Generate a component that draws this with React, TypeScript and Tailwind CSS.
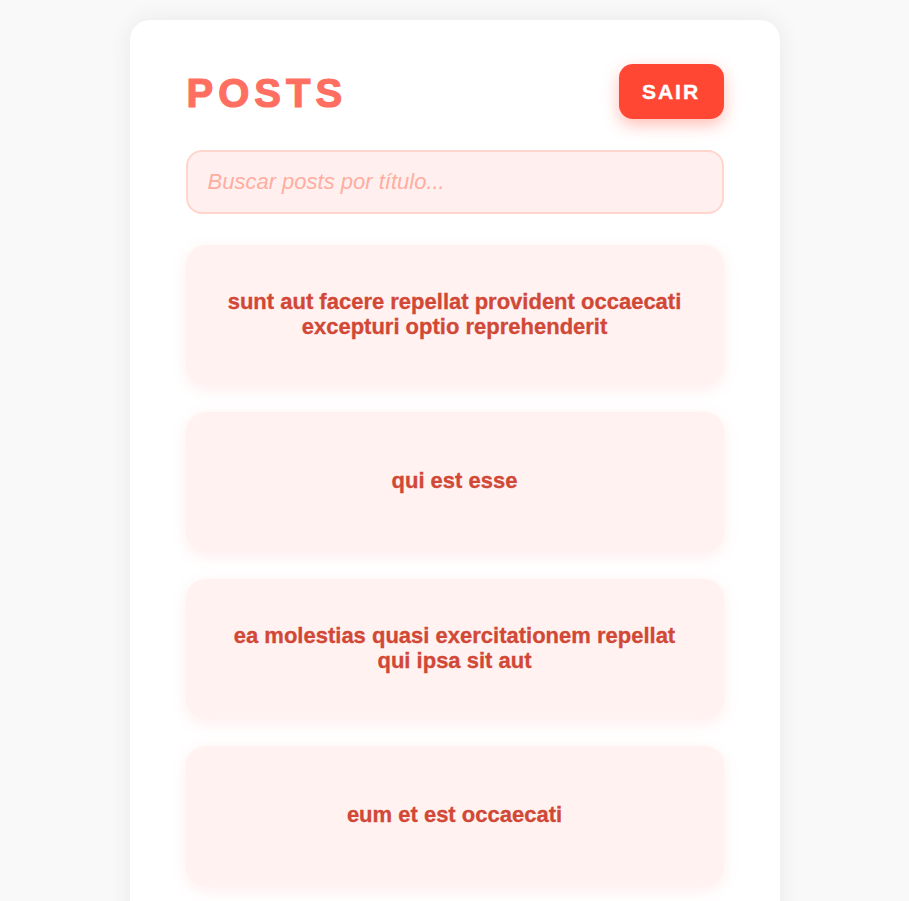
import React from "react";

const posts = [
  "sunt aut facere repellat provident occaecati excepturi optio reprehenderit",
  "qui est esse",
  "ea molestias quasi exercitationem repellat qui ipsa sit aut",
  "eum et est occaecati",
  "nesciunt quas odio",
];

export default function App() {
  return (
    <div
      className="min-h-screen bg-[#f9f9f9] flex justify-center pt-5"
      style={{ fontFamily: '"Liberation Sans", Arial, sans-serif' }}
    >
      <div className="w-[650px] bg-white rounded-[20px] shadow-[0_0_24px_rgba(0,0,0,0.07)] px-14 pt-11 pb-10 h-fit">
        <div className="flex items-center justify-between">
          <h1 className="text-[40px] leading-none font-black tracking-[5px] text-[#ff6f61] [-webkit-text-stroke:1.2px_#ff6f61] mt-[3px] ml-[1px]">
            POSTS
          </h1>
          <button className="w-[105px] h-[55px] rounded-[14px] bg-[#ff4733] text-white font-bold text-[21px] tracking-[2px] [-webkit-text-stroke:0.4px_#ffffff] shadow-[0_6px_16px_rgba(255,71,51,0.35)]">
            SAIR
          </button>
        </div>
        <input
          className="mt-[31px] w-full h-[64px] rounded-[16px] border-2 border-[#ffd5cc] bg-[#fff0ef] px-5 text-[22px] italic text-[#d14836] placeholder:text-[#ffada0] outline-none"
          placeholder="Buscar posts por título..."
        />
        <div className="mt-[31px] flex flex-col gap-[27px]">
          {posts.map((p) => (
            <div
              key={p}
              className="h-[140px] rounded-[20px] bg-[#fff2f1] shadow-[0_4px_16px_rgba(255,111,97,0.12)] flex items-center justify-center px-8 pb-[2px] text-center"
            >
              <h2 className="text-[22px] leading-[1.15] font-bold text-[#d14836] [-webkit-text-stroke:0.3px_#d14836]">{p}</h2>
            </div>
          ))}
        </div>
      </div>
    </div>
  );
}
